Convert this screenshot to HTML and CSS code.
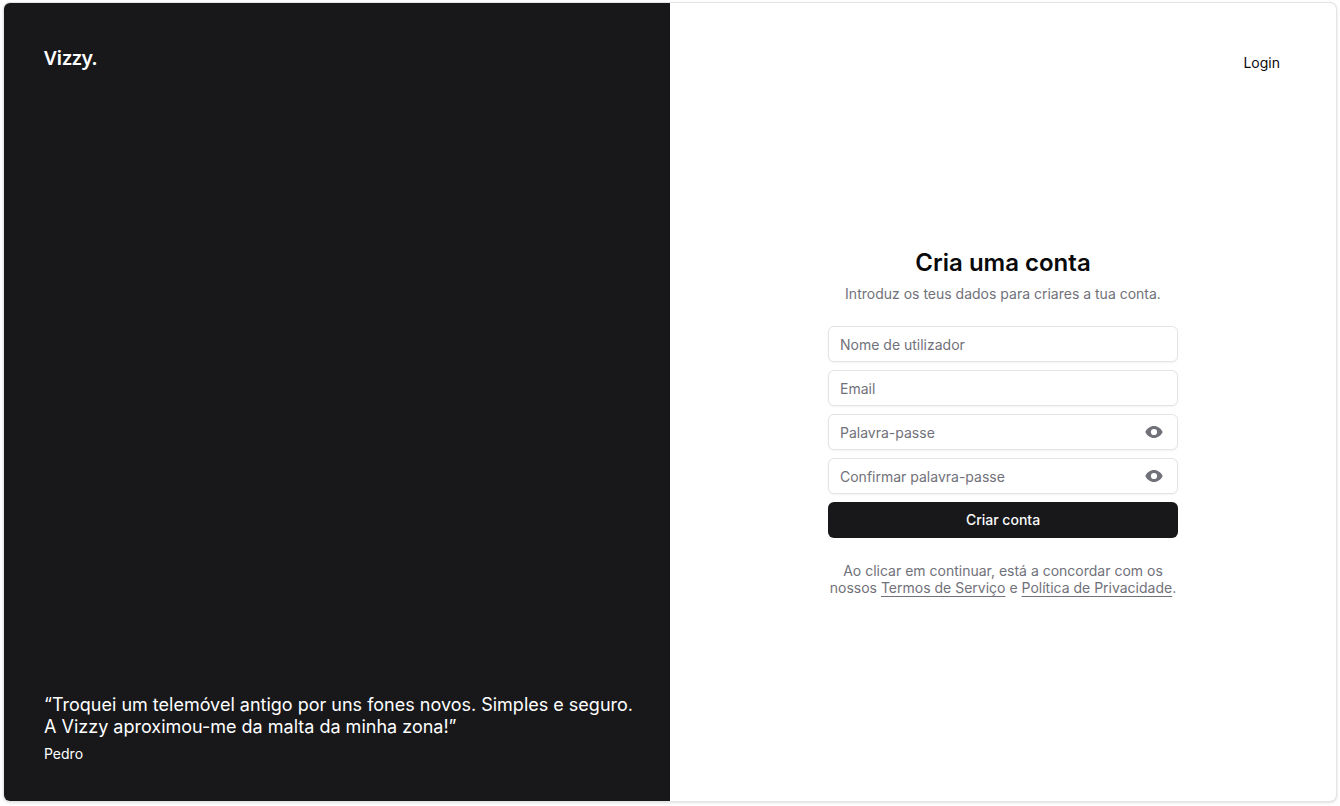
FILE: index.html
```html
<!DOCTYPE html>
<html lang="pt">
<head>
<meta charset="utf-8">
<meta name="viewport" content="width=device-width, initial-scale=1">
<title>Vizzy</title>
<link rel="stylesheet" href="styles.css">
</head>
<body>
<div class="frame">
  <aside class="showcase">
    <div class="brand">Vizzy.</div>
    <blockquote class="quote">
      <p class="quote-text">“Troquei um telemóvel antigo por uns fones novos. Simples e seguro. A Vizzy aproximou-me da malta da minha zona!”</p>
      <footer class="quote-author">Pedro</footer>
    </blockquote>
  </aside>
  <main class="panel">
    <nav class="nav"><a class="login" href="#">Login</a></nav>
    <div class="signup">
      <h1 class="title">Cria uma conta</h1>
      <p class="subtitle">Introduz os teus dados para criares a tua conta.</p>
      <form class="form">
        <input class="field" type="text" placeholder="Nome de utilizador" aria-label="Nome de utilizador">
        <input class="field" type="email" placeholder="Email" aria-label="Email">
        <div class="password">
          <input class="field field-secret" type="password" placeholder="Palavra-passe" aria-label="Palavra-passe">
          <button class="reveal" type="button" aria-label="Mostrar palavra-passe">
            <svg class="eye" viewBox="0 0 18 12" aria-hidden="true"><path fill="currentColor" fill-rule="evenodd" d="M9 0C5.200 0 2 2.400 .300 6C2 9.600 5.200 12 9 12S16 9.600 17.700 6C16 2.400 12.800 0 9 0ZM9 2.900A3.100 3.100 0 1 1 9 9.100A3.100 3.100 0 1 1 9 2.900Z"/></svg>
          </button>
        </div>
        <div class="password">
          <input class="field field-secret" type="password" placeholder="Confirmar palavra-passe" aria-label="Confirmar palavra-passe">
          <button class="reveal" type="button" aria-label="Mostrar confirmação">
            <svg class="eye" viewBox="0 0 18 12" aria-hidden="true"><path fill="currentColor" fill-rule="evenodd" d="M9 0C5.200 0 2 2.400 .300 6C2 9.600 5.200 12 9 12S16 9.600 17.700 6C16 2.400 12.800 0 9 0ZM9 2.900A3.100 3.100 0 1 1 9 9.100A3.100 3.100 0 1 1 9 2.900Z"/></svg>
          </button>
        </div>
        <button class="submit" type="submit">Criar conta</button>
      </form>
      <p class="terms">Ao clicar em continuar, está a concordar com os nossos <a class="terms-link" href="#">Termos de Serviço</a> e <a class="terms-link" href="#">Política de Privacidade</a>.</p>
    </div>
  </main>
</div>
</body>
</html>
```
FILE: styles.css
```css
* { box-sizing: border-box; }
body {
  margin: 0;
  padding: 3px 4px 5px;
  min-height: 100vh;
  display: flex;
  background: #fff;
  color: #09090b;
  font: 14px/20px Inter, "Liberation Sans", sans-serif;
}
p, h1, blockquote { margin: 0; }
.frame {
  flex: 1;
  display: grid;
  grid-template-columns: 1fr 1fr;
  border-radius: 6px;
  overflow: hidden;
  box-shadow: 0 0 0 1px #e4e4e7, 0 1px 3px 1px rgba(0, 0, 0, .12);
}
.showcase {
  display: flex;
  flex-direction: column;
  justify-content: space-between;
  padding: 40px 32px 37px 40px;
  background: #18181b;
  color: #fff;
}
.brand { font: 600 20px/30px "Noto Sans", sans-serif; }
.quote { display: grid; gap: 6px; }
.quote-text { font-size: 18px; line-height: 22px; }
.panel {
  display: grid;
  grid-template-rows: 84px 1fr 84px;
}
.nav {
  display: flex;
  justify-content: flex-end;
  align-items: flex-end;
  padding: 0 56px 14px;
}
.login { color: inherit; text-decoration: none; }
.signup {
  width: 350px;
  max-width: 100%;
  margin: 0 auto;
  align-self: center;
  padding-top: 39px;
  text-align: center;
}
.title { font-size: 24px; line-height: 32px; font-weight: 600; }
.subtitle { margin-top: 5px; color: #71717a; }
.form { display: grid; gap: 8px; margin: 22px 0 24px; }
.field {
  width: 100%;
  height: 36px;
  padding: 0 11px;
  border: 1px solid #e4e4e7;
  border-radius: 6px;
  background: #fff;
  color: inherit;
  font: inherit;
  box-shadow: 0 1px 2px rgba(0, 0, 0, .05);
}
.field::placeholder { color: #71717a; opacity: 1; }
.field-secret { padding-right: 44px; }
.password { position: relative; }
.reveal {
  position: absolute;
  top: 0;
  right: 10px;
  width: 28px;
  height: 36px;
  display: grid;
  place-items: center;
  padding: 0;
  border: 0;
  background: none;
  color: #71717a;
}
.eye { width: 18px; height: 12px; display: block; }
.submit {
  height: 36px;
  border: 0;
  border-radius: 6px;
  background: #18181b;
  color: #fafafa;
  font: inherit;
  font-weight: 500;
}
.terms { color: #71717a; line-height: 17px; }
.terms-link { color: inherit; text-underline-offset: 3px; }
```
